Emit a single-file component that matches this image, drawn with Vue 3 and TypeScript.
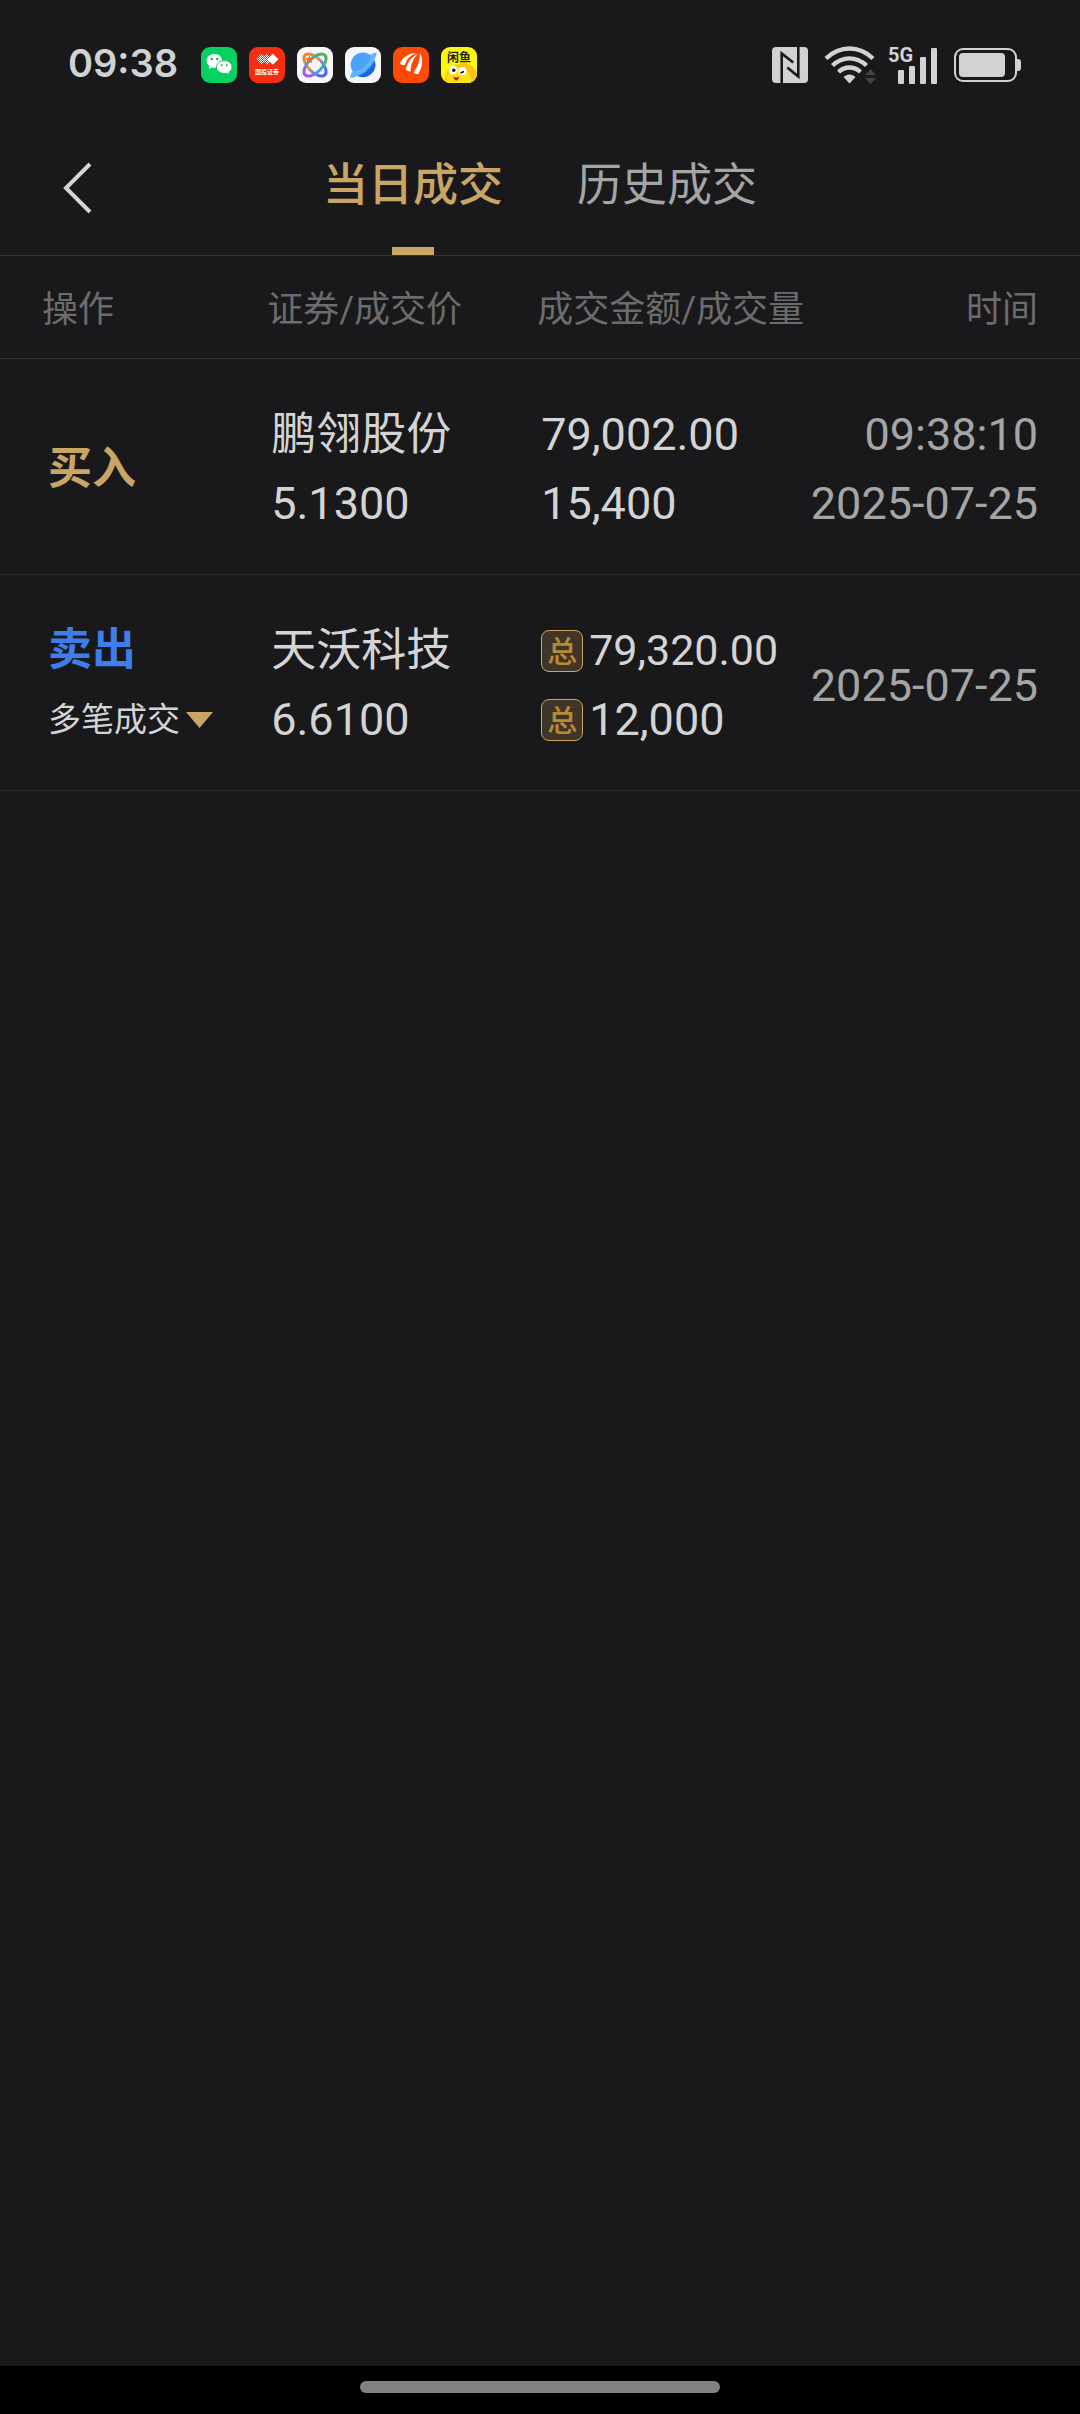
<script setup lang="ts">
import { ref } from 'vue'

interface Trade {
  id: number
  side: 'buy' | 'sell'
  label: string
  name: string
  price: string
  amount: string
  volume: string
  time?: string
  date: string
  grouped: boolean
}

const tabs = ['当日成交', '历史成交']
const activeTab = ref(0)
const expanded = ref(false)

const trades: Trade[] = [
  {
    id: 1,
    side: 'buy',
    label: '买入',
    name: '鹏翎股份',
    price: '5.1300',
    amount: '79,002.00',
    volume: '15,400',
    time: '09:38:10',
    date: '2025-07-25',
    grouped: false,
  },
  {
    id: 2,
    side: 'sell',
    label: '卖出',
    name: '天沃科技',
    price: '6.6100',
    amount: '79,320.00',
    volume: '12,000',
    date: '2025-07-25',
    grouped: true,
  },
]
</script>

<template>
  <div class="screen">
    <div class="status">
      <span class="clock">09:38</span>
      <div class="apps">
        <svg class="app" viewBox="0 0 36 36" aria-hidden="true">
          <rect width="36" height="36" rx="9" fill="#07d160" />
          <path d="M13.4 7C8.800 7 5.600 10 5.600 13.800c0 2.200 1.100 4 2.900 5.300l-.6 3 3-1.600c.8.200 1.600.3 2.500.3 4.600 0 7.600-3 7.600-7S18 7 13.400 7z" fill="#fff" />
          <path d="M23.300 13.600c-4.500 0-7.800 3-7.800 6.500s3.300 6.500 7.800 6.500c.9 0 1.700-.1 2.500-.4l2.700 1.500-.5-2.500c1.900-1.200 3-3 3-5.100 0-3.500-3.300-6.500-7.700-6.500z" fill="#fff" stroke="#07d160" stroke-width="1" />
          <g fill="#07b050">
            <circle cx="10.800" cy="12" r="1.200" />
            <circle cx="16.200" cy="12" r="1.200" />
            <circle cx="20.700" cy="18.300" r="1" />
            <circle cx="25.700" cy="18.300" r="1" />
          </g>
        </svg>
        <svg class="app" viewBox="0 0 36 36" aria-hidden="true">
          <defs>
            <pattern id="checks" width="2" height="2" patternUnits="userSpaceOnUse">
              <rect width="1" height="1" fill="#fff" />
              <rect x="1" y="1" width="1" height="1" fill="#fff" />
            </pattern>
          </defs>
          <rect width="36" height="36" rx="9" fill="#f52d13" />
          <path d="M12.500 6.800l5.500 5.500-5.500 5.500L7 12.300z" fill="url(#checks)" />
          <path d="M18 6.800l5.500 5.500-5.500 5.500-5.500-5.500z" fill="url(#checks)" />
          <path d="M23.800 6.800l5.500 5.500-5.500 5.500-5.500-5.500z" fill="#fff" />
          <text x="18" y="27" text-anchor="middle" font-size="6" font-weight="700" fill="#fff">国投证券</text>
        </svg>
        <svg class="app" viewBox="0 0 36 36" aria-hidden="true">
          <defs>
            <linearGradient id="loopA" x1="0" y1="0" x2="1" y2="0">
              <stop offset="0" stop-color="#f58220" />
              <stop offset=".4" stop-color="#ee9a3a" />
              <stop offset=".65" stop-color="#6a7cf0" />
              <stop offset="1" stop-color="#4a63f0" />
            </linearGradient>
            <linearGradient id="loopB" x1="0" y1="0" x2="1" y2="0">
              <stop offset="0" stop-color="#b455e0" />
              <stop offset=".5" stop-color="#35a9e8" />
              <stop offset="1" stop-color="#4fb84a" />
            </linearGradient>
          </defs>
          <rect width="36" height="36" rx="9" fill="#f7f7f7" />
          <g fill="none" stroke-width="3">
            <ellipse cx="18" cy="18" rx="14" ry="7" transform="rotate(45 18 18)" stroke="url(#loopA)" />
            <ellipse cx="18" cy="18" rx="14" ry="7" transform="rotate(-45 18 18)" stroke="url(#loopB)" />
          </g>
          <path d="M12.500 8.500l1.200 2.600 2.800.2-1.900 2 .5 2.900-2.600-1.500-2.500 1.500.5-2.900-1.900-2 2.800-.2z" fill="#f26a1b" />
        </svg>
        <svg class="app" viewBox="0 0 36 36" aria-hidden="true">
          <rect width="36" height="36" rx="9" fill="#f4f6f8" />
          <circle cx="18" cy="17.700" r="12.300" fill="#4aa3fa" />
          <path d="M29.500 13.300A12.300 12.300 0 0 1 13 28.900C20.500 26.500 26.500 20.500 29.500 13.300z" fill="#1c63e4" />
          <path d="M25.500 8c2.600-1.900 5-2.600 5.700-1.900 1.500 1.600-2.600 9-9 15.300S7.200 32 5.600 30.500c-.9-.9.200-3.600 2.400-6.500 1.500 1.500 7-.5 12-5.500S27 9.500 25.500 8z" fill="#62b4fc" />
        </svg>
        <svg class="app" viewBox="0 0 36 36" aria-hidden="true">
          <rect width="36" height="36" rx="9" fill="#ff4a05" />
          <g fill="#fff">
            <path d="M23 6C15 6.500 8.500 11 7 17c1.600.9 3.200 1.300 5 1.100C13 13 16.500 9 23 6z" />
            <path d="M25.300 6.300C18.500 10 13.800 16 12.800 22.800c1.500 1.100 3 1.600 4.700 1.600C17.800 17.500 20 11.500 25.300 6.300z" />
            <path d="M27 6.500c3.500 5 2.600 14-1.800 20.500-1.800 0-3.300-.5-4.600-1.600C24.800 19.500 27 13 27 6.500z" />
          </g>
        </svg>
        <svg class="app" viewBox="0 0 36 36" aria-hidden="true">
          <defs>
            <clipPath id="tile"><rect width="36" height="36" rx="9" /></clipPath>
          </defs>
          <g clip-path="url(#tile)">
            <rect width="36" height="36" fill="#fbf90b" />
            <path d="M4 36C3 26 8 18 17 17.500c3-2 8-3 10 0 5 1 9 6 9 10V36z" fill="#fcc419" />
            <path d="M6 36c-1-8 3-15 11-15s14 7 13 15z" fill="#ffe01a" />
          </g>
          <circle cx="12" cy="23" r="4.200" fill="#fff" />
          <circle cx="21.500" cy="24" r="4" fill="#fff" />
          <circle cx="12.800" cy="23.200" r="1.700" fill="#111" />
          <path d="M19.500 26l3.500-1.500" stroke="#111" stroke-width="1.500" />
          <path d="M12.500 29.500c2 1.300 4 1.200 5.500 0-.3 2.800-1.500 4.300-3 4-1.500-.2-2.400-1.800-2.500-4z" fill="#c21f1a" />
          <text x="18" y="15" text-anchor="middle" font-size="12" font-weight="700" fill="#222">闲鱼</text>
        </svg>
      </div>
      <div class="system">
        <svg class="nfc" viewBox="0 0 36 36" aria-hidden="true">
          <rect width="36" height="36" rx="4" fill="#d2d2d3" />
          <g fill="none" stroke="#19191b" stroke-width="2.600">
            <path d="M9.700 36V6.500l11.500 9" />
            <path d="M26.300 0v29.500l-11-9" />
          </g>
        </svg>
        <svg class="wifi" viewBox="0 0 52 38" aria-hidden="true">
          <g fill="none" stroke="#d2d2d3" stroke-width="4.400">
            <path d="M2 12.500C16-.8 35-.8 49 12.500" />
            <path d="M8.500 19.500c10-9.500 24-9.500 34 0" />
            <path d="M14.500 26c6.500-6 15.500-6 22 0" />
          </g>
          <path d="M19.500 31c3.500-3.500 8.500-3.500 12 0l-6 6.500z" fill="#d2d2d3" />
          <path d="M46.500 23l5.500 6H41z M46.500 38l5.500-6H41z" fill="#434345" />
        </svg>
        <svg class="signal" viewBox="0 0 50 46" aria-hidden="true">
          <text x="0" y="20" font-size="20" font-weight="700" fill="#d2d2d3">5G</text>
          <g fill="#d2d2d3">
            <rect x="10" y="28" width="6" height="14" rx="1" />
            <rect x="21" y="24" width="6" height="18" rx="1" />
            <rect x="32" y="15" width="6" height="27" rx="1" />
            <rect x="43" y="6" width="6" height="36" rx="1" />
          </g>
        </svg>
        <svg class="battery" viewBox="0 0 68 34" aria-hidden="true">
          <rect x="1" y="1" width="61" height="32" rx="8" fill="none" stroke="#d2d2d3" stroke-width="2" />
          <rect x="5" y="5" width="46" height="24" rx="4" fill="#d2d2d3" />
          <path d="M63 11h1c2 0 3 1 3 3v6c0 2-1 3-3 3h-1z" fill="#d2d2d3" />
        </svg>
      </div>
    </div>

    <header class="nav">
      <button class="back" type="button" aria-label="返回">
        <svg viewBox="0 0 30 52" aria-hidden="true">
          <path d="M28 2L4 26l24 24" fill="none" stroke="#d4d4d5" stroke-width="4" />
        </svg>
      </button>
      <div class="tabs" role="tablist">
        <button
          v-for="(tab, i) in tabs"
          :key="tab"
          class="tab"
          :class="{ active: i === activeTab }"
          type="button"
          role="tab"
          :aria-selected="i === activeTab"
          @click="activeTab = i"
        >
          {{ tab }}
        </button>
      </div>
    </header>

    <main class="content">
      <table class="trades">
        <thead>
          <tr>
            <th class="col-side" scope="col">操作</th>
            <th class="col-stock" scope="col">证券/成交价</th>
            <th class="col-amount" scope="col">成交金额/成交量</th>
            <th class="col-time" scope="col">时间</th>
          </tr>
        </thead>
        <tbody>
          <tr v-for="t in trades" :key="t.id">
            <td class="side">
              <div class="action" :class="t.side">{{ t.label }}</div>
              <button
                v-if="t.grouped"
                class="more"
                type="button"
                :aria-expanded="expanded"
                @click="expanded = !expanded"
              >
                多笔成交
                <svg class="caret" viewBox="0 0 27 16" aria-hidden="true">
                  <path d="M0 0h27L13.500 16z" fill="#c9a566" />
                </svg>
              </button>
            </td>
            <td>
              <div class="line">{{ t.name }}</div>
              <div class="line">{{ t.price }}</div>
            </td>
            <td>
              <div class="line">
                <span v-if="t.grouped" class="badge">总</span>
                <span :class="{ compact: t.grouped }">{{ t.amount }}</span>
              </div>
              <div class="line">
                <span v-if="t.grouped" class="badge">总</span>
                <span>{{ t.volume }}</span>
              </div>
            </td>
            <td class="when">
              <div v-if="t.time">{{ t.time }}</div>
              <div>{{ t.date }}</div>
            </td>
          </tr>
        </tbody>
      </table>
    </main>

    <footer class="gesture"><span class="pill"></span></footer>
  </div>
</template>

<style>
body {
  background: #19191b;
}
</style>

<style scoped>
.screen {
  display: flex;
  flex-direction: column;
  min-height: 100vh;
  background: #19191b;
  color: #d4d4d5;
  font-family: Roboto, "Noto Sans CJK SC", sans-serif;
}

button {
  padding: 0;
  border: 0;
  background: none;
  color: inherit;
  font: inherit;
}

svg {
  display: block;
}

.status {
  display: flex;
  align-items: center;
  box-sizing: border-box;
  height: 112px;
  padding: 18px 58px 0 68px;
}

.clock {
  width: 133px;
  padding-bottom: 4px;
  color: #d2d2d3;
  font: 600 38px/44px Inter, sans-serif;
}

.apps {
  display: flex;
  gap: 12px;
}

.app {
  width: 36px;
  height: 36px;
}

.system {
  display: flex;
  align-items: center;
  gap: 16px;
  margin-left: auto;
}

.nfc {
  width: 36px;
  height: 36px;
}

.wifi {
  width: 52px;
  height: 38px;
}

.signal {
  width: 50px;
  height: 46px;
  margin-left: -4px;
}

.battery {
  width: 68px;
  height: 34px;
}

.nav {
  display: grid;
  grid-template-columns: 1fr auto 1fr;
  height: 143px;
  border-bottom: 1px solid #343436;
}

.back {
  justify-self: start;
  padding: 8px 62px 0;
}

.back svg {
  width: 30px;
  height: 52px;
}

.tabs {
  display: flex;
  gap: 74px;
}

.tab {
  position: relative;
  padding-top: 4px;
  color: #a5a5a6;
  font-size: 45px;
  line-height: 60px;
}

.tab.active {
  color: #c9a566;
  font-weight: 500;
}

.tab.active::after {
  content: "";
  position: absolute;
  bottom: 0;
  left: 50%;
  width: 42px;
  height: 8px;
  margin-left: -21px;
  background: #c9a566;
}

.content {
  flex: 1;
}

.trades {
  width: 100%;
  border-spacing: 0;
  table-layout: fixed;
}

th,
td {
  box-sizing: border-box;
}

th {
  height: 103px;
  padding: 6px 0 0 8px;
  border-bottom: 1px solid #343436;
  color: #6c6c6e;
  font-size: 36px;
  font-weight: 400;
  line-height: 48px;
  text-align: left;
  white-space: nowrap;
}

.col-side {
  width: 24%;
  padding-left: 42px;
}

.col-stock {
  width: 25%;
}

.col-amount {
  width: 26%;
}

.col-time {
  padding-right: 42px;
  text-align: right;
}

td {
  padding: 41px 0 36px 12px;
  border-bottom: 1px solid #2c2c2e;
  font-size: 45px;
  line-height: 69px;
  vertical-align: middle;
  white-space: nowrap;
}

td.side {
  padding-left: 48px;
}

td.when {
  padding-left: 0;
  padding-right: 42px;
  color: #a5a5a5;
  text-align: right;
}

.line {
  display: flex;
  align-items: center;
  gap: 6px;
}

.action {
  font-size: 44px;
  font-weight: 700;
}

.action.buy {
  color: #c9a566;
}

.action.sell {
  color: #3d7eea;
}

.more {
  display: flex;
  align-items: center;
  gap: 6px;
  font-size: 33px;
  line-height: 69px;
}

.caret {
  width: 27px;
  height: 16px;
}

.compact {
  font-size: 43px;
}

.badge {
  box-sizing: border-box;
  width: 42px;
  height: 42px;
  border: 1px solid #c9a566;
  border-radius: 8px;
  background: #403529;
  color: #b98a35;
  font-size: 30px;
  font-weight: 500;
  line-height: 42px;
  text-align: center;
}

.gesture {
  display: flex;
  justify-content: center;
  align-items: center;
  height: 48px;
  padding-bottom: 6px;
  box-sizing: border-box;
  background: #000;
}

.pill {
  width: 33.333%;
  height: 12px;
  border-radius: 6px;
  background: #828282;
}
</style>
